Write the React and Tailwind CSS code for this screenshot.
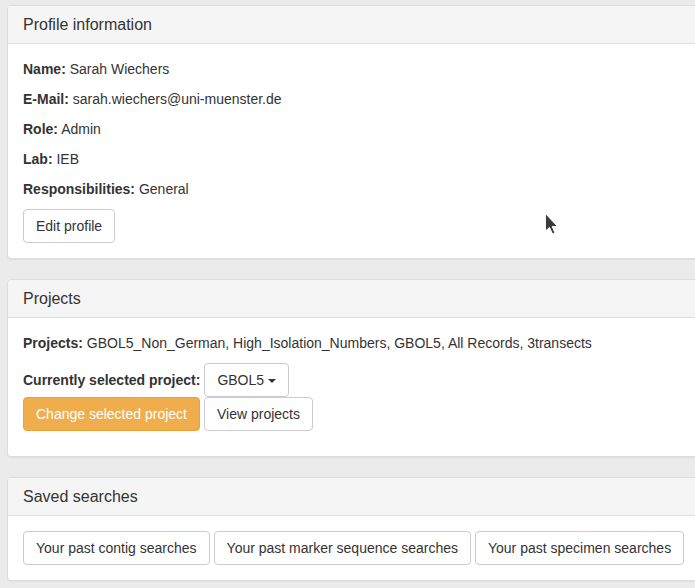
import React from 'react'

const FONT = { fontFamily: '"Liberation Sans", Arial, Helvetica, sans-serif' }

const btn = 'inline-block border border-[#ccc] bg-white rounded-[4px] px-3 py-[6px] text-[14px] leading-5 text-[#333] whitespace-nowrap'

function Panel({ title, children, bodyClass = '' }) {
  return (
    <div className="w-[720px] bg-white border border-[#dddddd] rounded-[4px] shadow-[0_1px_1px_rgba(0,0,0,0.05)]">
      <div className="bg-[#f5f5f5] border-b border-[#dddddd] rounded-t-[3px] px-[15px] py-[10px]">
        <h3 className="text-[16px] leading-[17px] text-[#333]">{title}</h3>
      </div>
      <div className={`px-[15px] pt-[15px] ${bodyClass}`}>{children}</div>
    </div>
  )
}

function Row({ label, value }) {
  return (
    <p className="mb-[10px] leading-5">
      <b className="font-bold">{label}:</b> {value}
    </p>
  )
}

function Cursor() {
  return (
    <svg className="absolute left-[544px] top-[212px]" width="16" height="24" viewBox="0 0 16 24">
      <path d="M1.5 1.5 L1.5 19 L5.5 15.5 L8.5 22 L11 21 L8.2 14.6 L13.5 14.6 Z" fill="#3a3a3a" stroke="#fff" strokeWidth="1" />
    </svg>
  )
}

export default function App() {
  return (
    <div className="relative w-[695px] h-[588px] overflow-hidden bg-[#ebebeb] text-[14px] text-[#333]" style={FONT}>
      <div className="pl-[7px] pt-[5px] flex flex-col gap-5">
        <Panel title="Profile information" bodyClass="pb-[15px]">
          <Row label="Name" value="Sarah Wiechers" />
          <Row label="E-Mail" value="sarah.wiechers@uni-muenster.de" />
          <Row label="Role" value="Admin" />
          <Row label="Lab" value="IEB" />
          <Row label="Responsibilities" value="General" />
          <button className={btn}>Edit profile</button>
        </Panel>

        <Panel title="Projects" bodyClass="pb-[25px]">
          <Row label="Projects" value="GBOL5_Non_German, High_Isolation_Numbers, GBOL5, All Records, 3transects" />
          <div className="flex items-center gap-1">
            <b className="font-bold leading-5">Currently selected project:</b>
            <button className={btn}>
              GBOL5{' '}
              <span className="inline-block align-middle w-0 h-0 border-x-4 border-x-transparent border-t-4 border-t-[#333]" />
            </button>
          </div>
          <div className="flex gap-1">
            <button className="inline-block border border-[#eea236] bg-[#f0ad4e] rounded-[4px] px-3 py-[6px] text-[14px] leading-5 text-white whitespace-nowrap">
              Change selected project
            </button>
            <button className={btn}>View projects</button>
          </div>
        </Panel>

        <Panel title="Saved searches" bodyClass="pb-[15px]">
          <div className="flex gap-1">
            <button className={btn}>Your past contig searches</button>
            <button className={btn}>Your past marker sequence searches</button>
            <button className={btn}>Your past specimen searches</button>
          </div>
        </Panel>
      </div>
      <Cursor />
    </div>
  )
}
